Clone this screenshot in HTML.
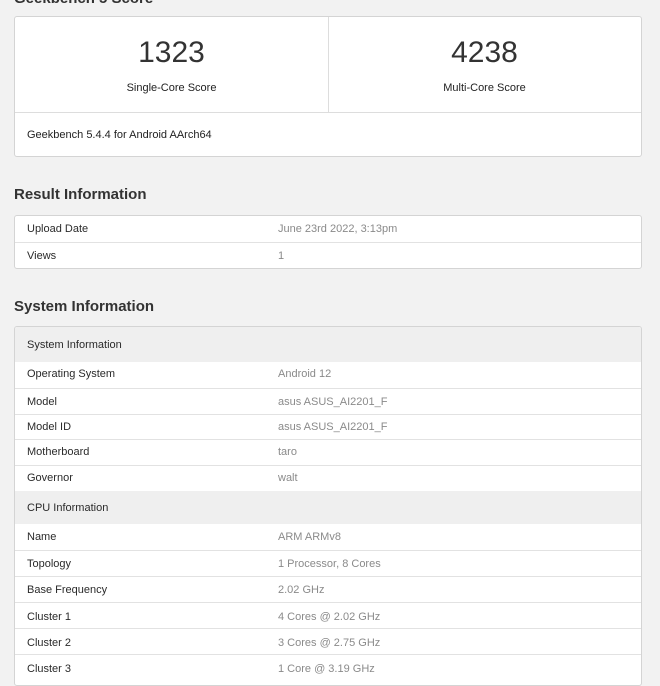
<!DOCTYPE html>
<html><head><style>
*{margin:0;padding:0;box-sizing:border-box}
body{width:660px;height:675px;overflow:hidden;background:#f2f2f2;font-family:"Liberation Sans",sans-serif;color:#222;position:relative}
.a{position:absolute}
h2{position:absolute;left:14px;font-size:15px;font-weight:bold;color:#333}
.card{position:absolute;left:14px;width:628px;background:#fff;border:1px solid #d4d4d4;border-radius:3px}
.row{position:absolute;left:0;right:0;border-top:1px solid #e2e2e2;font-size:11px}
.row .l{position:absolute;left:12px;color:#2a2a2a}
.row .v{position:absolute;left:263px;color:#8a8a8a}
.hd{background:#efefef}
</style></head><body>
<h2 style="top:-10px">Geekbench 5 Score</h2>
<div class="card" style="top:16px;height:141px">
 <div class="a" style="left:313px;top:0;height:96px;border-left:1px solid #ddd"></div>
 <div class="a" style="left:0;top:95px;width:626px;border-top:1px solid #ddd"></div>
 <div class="a" style="left:0;width:313px;top:19px;text-align:center;font-size:30px;color:#333">1323</div>
 <div class="a" style="left:0;width:313px;top:65px;text-align:center;font-size:11px">Single-Core Score</div>
 <div class="a" style="left:313px;width:313px;top:19px;text-align:center;font-size:30px;color:#333">4238</div>
 <div class="a" style="left:313px;width:313px;top:65px;text-align:center;font-size:11px">Multi-Core Score</div>
 <div class="a" style="left:12px;top:112px;font-size:11px">Geekbench 5.4.4 for Android AArch64</div>
</div>
<h2 style="top:186px">Result Information</h2>
<div class="card" style="top:215px;height:54px">
 <div class="row" style="top:0;height:26px;border:0"><span class="l" style="top:7px">Upload Date</span><span class="v" style="top:7px">June 23rd 2022, 3:13pm</span></div>
 <div class="row" style="top:26px;height:26px"><span class="l" style="top:7px">Views</span><span class="v" style="top:7px">1</span></div>
</div>
<h2 style="top:298px">System Information</h2>
<div class="card" style="top:326px;height:360px;overflow:hidden">
 <div class="row hd" style="top:0;height:35px;border:0"><span class="l" style="top:12px">System Information</span></div>
 <div class="row" style="top:35px;height:26px;border:0"><span class="l" style="top:6px">Operating System</span><span class="v" style="top:6px">Android 12</span></div>
 <div class="row" style="top:61px;height:26px"><span class="l" style="top:7px">Model</span><span class="v" style="top:7px">asus ASUS_AI2201_F</span></div>
 <div class="row" style="top:87px;height:26px"><span class="l" style="top:6px">Model ID</span><span class="v" style="top:6px">asus ASUS_AI2201_F</span></div>
 <div class="row" style="top:112px;height:26px"><span class="l" style="top:6px">Motherboard</span><span class="v" style="top:6px">taro</span></div>
 <div class="row" style="top:138px;height:26px"><span class="l" style="top:6px">Governor</span><span class="v" style="top:6px">walt</span></div>
 <div class="row hd" style="top:164px;height:33px;border:0"><span class="l" style="top:11px">CPU Information</span></div>
 <div class="row" style="top:197px;height:26px;border:0"><span class="l" style="top:7px">Name</span><span class="v" style="top:7px">ARM ARMv8</span></div>
 <div class="row" style="top:223px;height:26px"><span class="l" style="top:7px">Topology</span><span class="v" style="top:7px">1 Processor, 8 Cores</span></div>
 <div class="row" style="top:249px;height:26px"><span class="l" style="top:7px">Base Frequency</span><span class="v" style="top:7px">2.02 GHz</span></div>
 <div class="row" style="top:275px;height:26px"><span class="l" style="top:8px">Cluster 1</span><span class="v" style="top:8px">4 Cores @ 2.02 GHz</span></div>
 <div class="row" style="top:301px;height:26px"><span class="l" style="top:8px">Cluster 2</span><span class="v" style="top:8px">3 Cores @ 2.75 GHz</span></div>
 <div class="row" style="top:327px;height:26px"><span class="l" style="top:8px">Cluster 3</span><span class="v" style="top:8px">1 Core @ 3.19 GHz</span></div>
</div>
</body></html>
